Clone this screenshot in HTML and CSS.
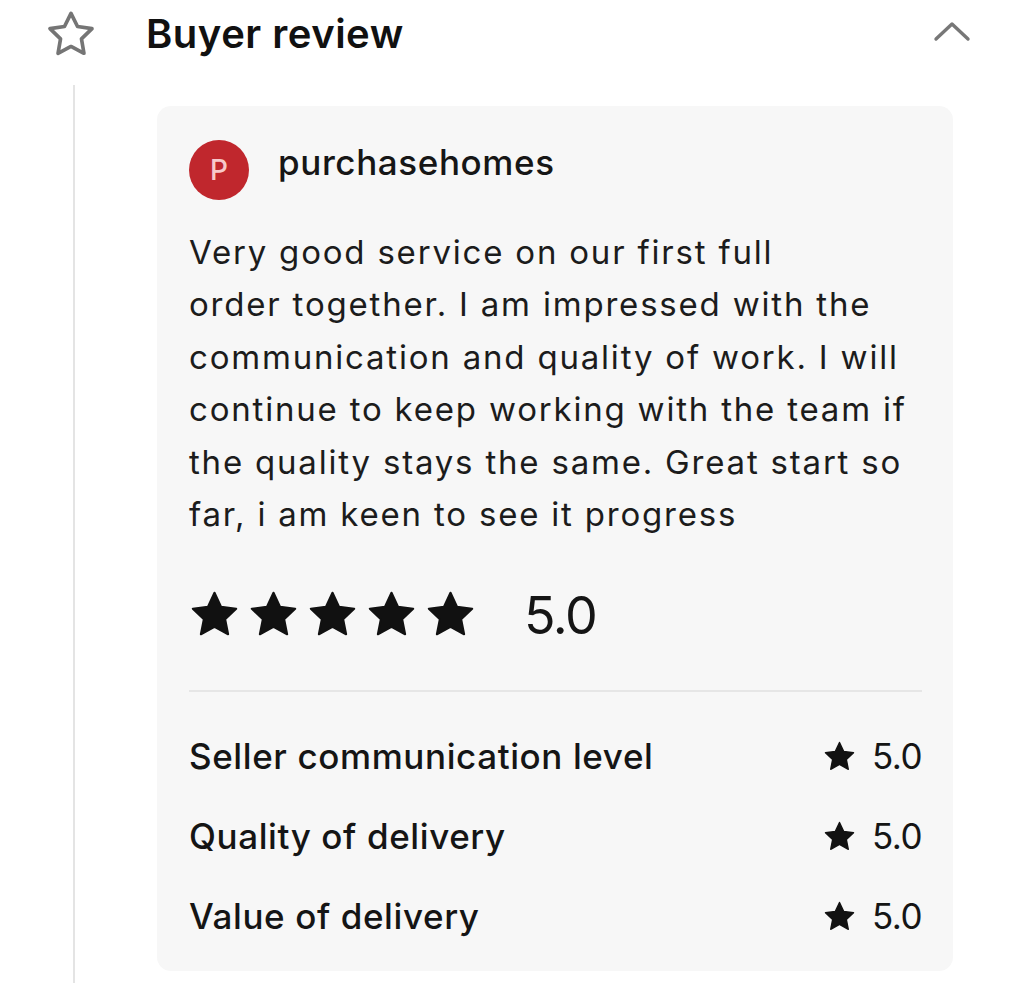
FILE: index.html
```html
<!DOCTYPE html>
<html lang="en">
<head>
<meta charset="utf-8">
<title>Buyer review</title>
<link rel="stylesheet" href="styles.css">
</head>
<body>
<section class="panel">
  <header class="panel-head">
    <svg class="head-star" viewBox="0 0 50 50" aria-hidden="true">
      <path d="M25 3.5L31.8 17.2 46.9 19.4 35.9 30.1 38.5 45.1 25 38 11.5 45.1 14.1 30.1 3.1 19.4 18.2 17.2Z" fill="none" stroke="#757575" stroke-width="3.8" stroke-linejoin="round"/>
    </svg>
    <h2 class="panel-title">Buyer review</h2>
    <svg class="chevron" viewBox="0 0 40 24" aria-hidden="true">
      <path d="M4 20L20 5l16 15" fill="none" stroke="#777" stroke-width="3.4" stroke-linecap="round" stroke-linejoin="round"/>
    </svg>
  </header>
  <div class="panel-body">
    <div class="rail"></div>
    <article class="card">
      <div class="user">
        <span class="avatar">P</span>
        <span class="username">purchasehomes</span>
      </div>
      <p class="review-text">Very good service on our first full<br>order together. I am impressed with the communication and quality of work. I will continue to keep working with the team if the quality stays the same. Great start so far, i am keen to see it progress</p>
      <div class="overall">
        <div class="stars">
          <svg class="star-big" viewBox="0 0 24 24"><path d="M12 1.8l3.1 6.6 7.1.9-5.2 4.9 1.4 7.1L12 17.8l-6.4 3.5 1.4-7.1-5.2-4.9 7.1-.9z" fill="#111" stroke="#111" stroke-width="1" stroke-linejoin="round"/></svg>
          <svg class="star-big" viewBox="0 0 24 24"><path d="M12 1.8l3.1 6.6 7.1.9-5.2 4.9 1.4 7.1L12 17.8l-6.4 3.5 1.4-7.1-5.2-4.9 7.1-.9z" fill="#111" stroke="#111" stroke-width="1" stroke-linejoin="round"/></svg>
          <svg class="star-big" viewBox="0 0 24 24"><path d="M12 1.8l3.1 6.6 7.1.9-5.2 4.9 1.4 7.1L12 17.8l-6.4 3.5 1.4-7.1-5.2-4.9 7.1-.9z" fill="#111" stroke="#111" stroke-width="1" stroke-linejoin="round"/></svg>
          <svg class="star-big" viewBox="0 0 24 24"><path d="M12 1.8l3.1 6.6 7.1.9-5.2 4.9 1.4 7.1L12 17.8l-6.4 3.5 1.4-7.1-5.2-4.9 7.1-.9z" fill="#111" stroke="#111" stroke-width="1" stroke-linejoin="round"/></svg>
          <svg class="star-big" viewBox="0 0 24 24"><path d="M12 1.8l3.1 6.6 7.1.9-5.2 4.9 1.4 7.1L12 17.8l-6.4 3.5 1.4-7.1-5.2-4.9 7.1-.9z" fill="#111" stroke="#111" stroke-width="1" stroke-linejoin="round"/></svg>
        </div>
        <span class="overall-score">5.0</span>
      </div>
      <hr class="divider">
      <ul class="criteria">
        <li class="crit">
          <span class="crit-label">Seller communication level</span>
          <span class="crit-score"><svg class="star-small" viewBox="0 0 24 24"><path d="M12 1.8l3.1 6.6 7.1.9-5.2 4.9 1.4 7.1L12 17.8l-6.4 3.5 1.4-7.1-5.2-4.9 7.1-.9z" fill="#111" stroke="#111" stroke-width="1" stroke-linejoin="round"/></svg>5.0</span>
        </li>
        <li class="crit">
          <span class="crit-label">Quality of delivery</span>
          <span class="crit-score"><svg class="star-small" viewBox="0 0 24 24"><path d="M12 1.8l3.1 6.6 7.1.9-5.2 4.9 1.4 7.1L12 17.8l-6.4 3.5 1.4-7.1-5.2-4.9 7.1-.9z" fill="#111" stroke="#111" stroke-width="1" stroke-linejoin="round"/></svg>5.0</span>
        </li>
        <li class="crit">
          <span class="crit-label">Value of delivery</span>
          <span class="crit-score"><svg class="star-small" viewBox="0 0 24 24"><path d="M12 1.8l3.1 6.6 7.1.9-5.2 4.9 1.4 7.1L12 17.8l-6.4 3.5 1.4-7.1-5.2-4.9 7.1-.9z" fill="#111" stroke="#111" stroke-width="1" stroke-linejoin="round"/></svg>5.0</span>
        </li>
      </ul>
    </article>
  </div>
</section>
</body>
</html>
```

FILE: styles.css
```css
* { box-sizing: border-box; }
html, body { margin: 0; padding: 0; background: #fff; }
body {
  font-family: Inter, "Noto Sans", "Liberation Sans", sans-serif;
  color: #1a1a1a;
  width: 1024px;
  height: 983px;
  overflow: hidden;
}
.panel-head {
  display: flex;
  align-items: center;
  height: 86px;
  padding: 0 52px 0 47px;
}
.head-star { width: 48px; height: 48px; flex: none; margin-top: -18px; }
.panel-title {
  margin: -20px 0 0 51px;
  font-size: 40px;
  font-weight: 600;
  letter-spacing: 0.5px;
  color: #111;
  flex: 1;
}
.chevron { width: 40px; height: 24px; flex: none; margin-top: -24px; }
.panel-body {
  display: flex;
  padding-left: 73px;
}
.rail {
  width: 2px;
  background: #e4e4e4;
  flex: none;
  height: 900px;
  margin-top: -1px;
}
.card {
  margin: 20px 0 0 82px;
  width: 796px;
  height: 865px;
  background: #f7f7f7;
  border-radius: 14px;
  padding: 34px 31px 0 32px;
}
.user { display: flex; align-items: center; gap: 29px; }
.avatar {
  width: 60px; height: 60px; border-radius: 50%;
  background: #c0272d;
  color: #f7c9cb;
  font-size: 28px;
  font-weight: 500;
  display: flex; align-items: center; justify-content: center;
  flex: none;
}
.username { font-size: 35px; font-weight: 500; letter-spacing: 0.6px; color: #161616; margin-top: -16px; }
.review-text {
  margin: 26px 0 0;
  font-size: 33px;
  line-height: 52.4px;
  letter-spacing: 1.8px;
  font-weight: 400;
  color: #1c1c1c;
}
.overall { display: flex; align-items: center; margin-top: 42px; }
.stars { display: flex; gap: 8px; }
.star-big { width: 51px; height: 51px; }
.overall-score { font-size: 52px; font-weight: 400; margin-left: 48px; color: #151515; letter-spacing: -1.5px; margin-top: 2px; }
.divider { border: 0; border-top: 2px solid #e6e6e6; margin: 43px 0 0; }
.criteria { list-style: none; margin: 24px 0 0; padding: 0; }
.crit { display: flex; justify-content: space-between; align-items: center; height: 80px; }
.crit-label { font-size: 35px; font-weight: 500; letter-spacing: 0.6px; color: #151515; }
.crit-score { display: flex; align-items: center; gap: 16px; font-size: 35px; font-weight: 400; color: #151515; letter-spacing: -0.5px; }
.star-small { width: 33px; height: 33px; }
```
